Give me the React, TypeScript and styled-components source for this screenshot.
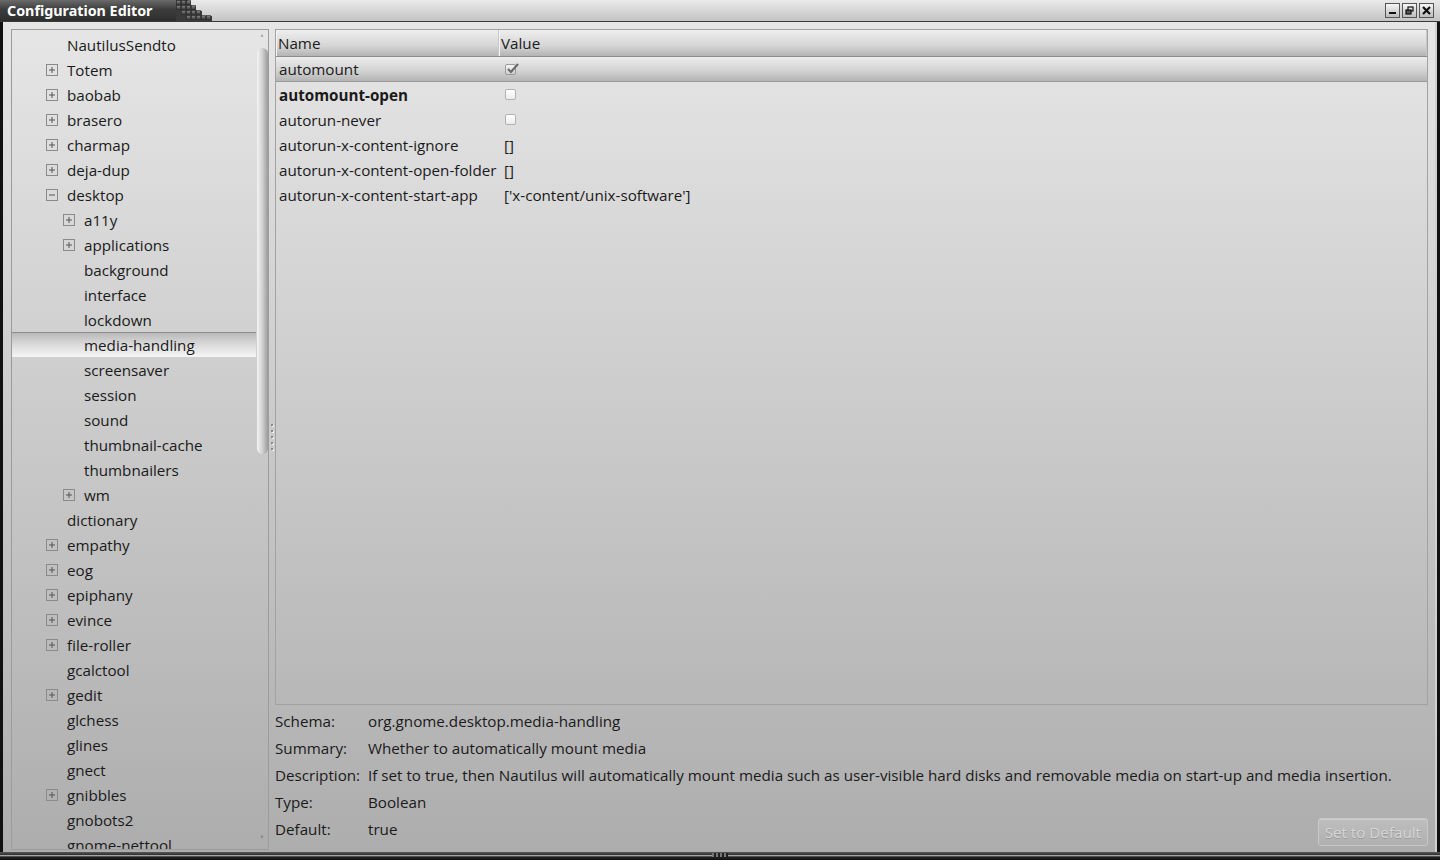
import React from 'react';
import styled, { createGlobalStyle, css } from 'styled-components';

const GlobalStyle = createGlobalStyle`
  html, body {
    margin: 0;
    padding: 0;
    height: 100%;
    overflow: hidden;
  }
  body {
    font-family: "Open Sans", "Noto Sans", sans-serif;
    color: #1a1a1a;
  }
`;

type TreeItem = {
  label: string;
  level: 1 | 2;
  expander?: 'plus' | 'minus';
  selected?: boolean;
};

const treeItems: TreeItem[] = [
  { label: 'NautilusSendto', level: 1 },
  { label: 'Totem', level: 1, expander: 'plus' },
  { label: 'baobab', level: 1, expander: 'plus' },
  { label: 'brasero', level: 1, expander: 'plus' },
  { label: 'charmap', level: 1, expander: 'plus' },
  { label: 'deja-dup', level: 1, expander: 'plus' },
  { label: 'desktop', level: 1, expander: 'minus' },
  { label: 'a11y', level: 2, expander: 'plus' },
  { label: 'applications', level: 2, expander: 'plus' },
  { label: 'background', level: 2 },
  { label: 'interface', level: 2 },
  { label: 'lockdown', level: 2 },
  { label: 'media-handling', level: 2, selected: true },
  { label: 'screensaver', level: 2 },
  { label: 'session', level: 2 },
  { label: 'sound', level: 2 },
  { label: 'thumbnail-cache', level: 2 },
  { label: 'thumbnailers', level: 2 },
  { label: 'wm', level: 2, expander: 'plus' },
  { label: 'dictionary', level: 1 },
  { label: 'empathy', level: 1, expander: 'plus' },
  { label: 'eog', level: 1, expander: 'plus' },
  { label: 'epiphany', level: 1, expander: 'plus' },
  { label: 'evince', level: 1, expander: 'plus' },
  { label: 'file-roller', level: 1, expander: 'plus' },
  { label: 'gcalctool', level: 1 },
  { label: 'gedit', level: 1, expander: 'plus' },
  { label: 'glchess', level: 1 },
  { label: 'glines', level: 1 },
  { label: 'gnect', level: 1 },
  { label: 'gnibbles', level: 1, expander: 'plus' },
  { label: 'gnobots2', level: 1 },
  { label: 'gnome-nettool', level: 1 },
];

type Key = {
  name: string;
  value: 'checked' | 'unchecked' | string;
  bold?: boolean;
  selected?: boolean;
};

const keys: Key[] = [
  { name: 'automount', value: 'checked', selected: true },
  { name: 'automount-open', value: 'unchecked', bold: true },
  { name: 'autorun-never', value: 'unchecked' },
  { name: 'autorun-x-content-ignore', value: '[]' },
  { name: 'autorun-x-content-open-folder', value: '[]' },
  { name: 'autorun-x-content-start-app', value: "['x-content/unix-software']" },
];

const Window = styled.div`
  width: 1440px;
  height: 860px;
  display: flex;
  flex-direction: column;
  background: #111;
  box-sizing: border-box;
`;

const TitleBar = styled.div`
  height: 22px;
  flex: none;
  display: flex;
  align-items: stretch;
  background: linear-gradient(#eaeaea, #c4c4c4);
  border-bottom: 1px solid #3a3a3a;
  box-sizing: border-box;
`;

const TitleTab = styled.div`
  width: 176px;
  display: flex;
  align-items: center;
  padding-left: 7px;
  box-sizing: border-box;
  background: linear-gradient(#6a6a6a, #3c3c3c 45%, #2e2e2e);
  color: #fff;
  font-family: "Noto Sans", "Open Sans", sans-serif;
  font-weight: 700;
  font-size: 14.3px;
`;

const Stairs = styled.svg`
  width: 44px;
  height: 21px;
  flex: none;
`;

const TitleSpacer = styled.div`
  flex: 1;
`;

const WinButtons = styled.div`
  display: flex;
  align-items: center;
  gap: 2px;
  padding-right: 6px;
`;

const WinButton = styled.div`
  width: 15px;
  height: 15px;
  box-sizing: border-box;
  border: 1px solid #555;
  background: linear-gradient(#f6f6f6, #bcbcbc);
  display: flex;
  align-items: center;
  justify-content: center;
`;

const Frame = styled.div`
  flex: 1;
  display: flex;
  min-height: 0;
  margin: 0 3px 0 3px;
  padding: 7px 7px 2px 8px;
  background: linear-gradient(#e6e6e6, #adadad);
  border-right: 2px solid #d0d0d0;
`;

const BottomEdge = styled.div`
  height: 8px;
  flex: none;
  display: flex;
  justify-content: center;
  background: linear-gradient(#5a5a5a, #2a2a2a 40%, #cfcfcf 45%, #222 60%, #111);
`;

const Grip = styled.div`
  width: 16px;
  height: 4px;
  margin-top: 1px;
  background: repeating-linear-gradient(90deg, #777 0 2px, #222 2px 4px);
`;

const TreePanel = styled.div`
  width: 258px;
  flex: none;
  display: flex;
  border: 1px solid #9c9c9c;
  box-sizing: border-box;
  overflow: hidden;
`;

const TreeList = styled.div`
  flex: 1;
  padding-top: 2px;
  overflow: hidden;
`;

const TreeRow = styled.div<{ $level: number; $selected?: boolean }>`
  height: 25px;
  display: flex;
  align-items: center;
  font-size: 15.2px;
  padding-left: ${p => (p.$level === 1 ? 34 : 51)}px;
  box-sizing: border-box;
  white-space: nowrap;
  ${p =>
    p.$selected &&
    css`
      border-top: 1px solid #8d8d8d;
      background: linear-gradient(#b9b9b9, #d8d8d8 45%, #f6f6f6);
    `}
`;

const ExpanderSlot = styled.div`
  width: 12px;
  height: 12px;
  margin-right: 9px;
  flex: none;
  display: flex;
  align-items: center;
  justify-content: center;
`;

const Expander = styled.svg`
  width: 12px;
  height: 12px;
`;

const ScrollTrack = styled.div`
  width: 12px;
  flex: none;
  display: flex;
  flex-direction: column;
  align-items: center;
`;

const ScrollArrow = styled.div`
  height: 18px;
  display: flex;
  align-items: center;
  justify-content: center;
  font-size: 10px;
  color: #444;
`;

const ScrollThumb = styled.div`
  width: 11px;
  height: 406px;
  border-radius: 6px;
  background: linear-gradient(90deg, #f4f4f4, #cfcfcf 50%, #9a9a9a);
`;

const ScrollRest = styled.div`
  flex: 1;
`;

const Splitter = styled.div`
  width: 6px;
  flex: none;
  display: flex;
  flex-direction: column;
  align-items: center;
  justify-content: center;
  gap: 4px;
  padding-bottom: 6px;
`;

const SplitDot = styled.span`
  width: 2px;
  height: 2px;
  background: #8a8a8a;
  box-shadow: 1px 1px 0 #f0f0f0;
`;

const RightPane = styled.div`
  flex: 1;
  display: flex;
  flex-direction: column;
  min-width: 0;
`;

const KeyTable = styled.div`
  height: 676px;
  flex: none;
  border: 1px solid #a2a2a2;
  box-sizing: border-box;
  display: flex;
  flex-direction: column;
`;

const HeaderRow = styled.div`
  height: 27px;
  flex: none;
  display: flex;
  box-sizing: border-box;
  background: linear-gradient(#eeeeee, #d6d6d6 60%, #b4b4b4);
  border-bottom: 1px solid #8c8c8c;
  font-size: 15.2px;
`;

const HeaderCell = styled.div<{ $width?: number }>`
  ${p => (p.$width ? `width: ${p.$width}px;` : 'flex: 1;')}
  display: flex;
  align-items: center;
  padding-left: 1px;
  box-sizing: border-box;
  border-right: 1px solid #c8c8c8;
  border-left: 1px solid #f4f4f4;
`;

const KeyRow = styled.div<{ $selected?: boolean }>`
  height: 25px;
  flex: none;
  display: flex;
  align-items: center;
  box-sizing: border-box;
  font-size: 15.2px;
  ${p =>
    p.$selected &&
    css`
      background: linear-gradient(#ececec, #d4d4d4 55%, #b4b4b4);
      border-bottom: 1px solid #9a9a9a;
    `}
`;

const NameCell = styled.div<{ $bold?: boolean }>`
  width: 228px;
  padding-left: 3px;
  box-sizing: border-box;
  font-weight: ${p => (p.$bold ? 700 : 400)};
  white-space: nowrap;
`;

const ValueCell = styled.div`
  flex: 1;
  display: flex;
  align-items: center;
  white-space: nowrap;
`;

const CheckBox = styled.div<{ $checked?: boolean }>`
  width: 11px;
  height: 11px;
  margin-left: 1px;
  border: 1px solid #b2b2b2;
  border-radius: 2px;
  box-sizing: border-box;
  background: linear-gradient(#ffffff, #ececec);
  position: relative;
  ${p =>
    p.$checked &&
    css`
      background: linear-gradient(#f4f4f4, #d0d0d0);
      border-color: #9a9a9a;
    `}
`;

const CheckMark = styled.svg`
  position: absolute;
  left: 0;
  top: -3px;
  width: 14px;
  height: 13px;
`;

const Details = styled.div`
  display: grid;
  grid-template-columns: 93px 1fr auto;
  grid-auto-rows: 27px;
  padding-top: 2px;
  font-size: 15.2px;
`;

const Label = styled.div`
  display: flex;
  align-items: center;
  white-space: nowrap;
`;

const Value = styled.div<{ $span?: boolean }>`
  display: flex;
  align-items: center;
  white-space: nowrap;
  ${p => p.$span && 'grid-column: 2 / span 2;'}
`;

const DefaultButton = styled.button`
  align-self: end;
  height: 28px;
  margin-bottom: -4px;
  padding: 0 6px;
  font-family: inherit;
  font-size: 15.2px;
  color: #d6d6d6;
  text-shadow: 0 1px 0 #9a9a9a;
  background: linear-gradient(#bebebe, #b0b0b0);
  border: 1px solid #c8c8c8;
  border-radius: 3px;
  box-shadow: inset 0 1px 0 #cdcdcd;
`;

const ExpanderIcon: React.FC<{ kind: 'plus' | 'minus' }> = ({ kind }) => (
  <Expander viewBox="0 0 12 12">
    <rect x="0.5" y="0.5" width="11" height="11" fill="none" stroke="#8a8a8a" />
    <line x1="3" y1="6" x2="9" y2="6" stroke="#555" />
    {kind === 'plus' && <line x1="6" y1="3" x2="6" y2="9" stroke="#555" />}
  </Expander>
);

const StairsIcon: React.FC = () => {
  const cells: [number, number][] = [
    [0, 0], [5, 0], [10, 0], [0, 5], [5, 5], [10, 5], [15, 5],
    [5, 10], [10, 10], [15, 10], [20, 10], [10, 15], [15, 15], [20, 15], [25, 15], [30, 15],
  ];
  return (
    <Stairs viewBox="0 0 44 21">
      <defs>
        <linearGradient id="cell" x1="0" y1="0" x2="0" y2="1">
          <stop offset="0" stopColor="#8a8a8a" />
          <stop offset="1" stopColor="#3a3a3a" />
        </linearGradient>
      </defs>
      <polygon points="0,0 0,21 36,21 36,16 26,16 26,11 20,11 20,6 15,6 15,1 12,1 12,0" fill="#3a3a3a" />
      {cells.map(([x, y]) => (
        <rect key={`${x}-${y}`} x={x + 0.5} y={y + 0.5} width={4} height={4} fill="url(#cell)" stroke="#2a2a2a" strokeWidth="0.6" />
      ))}
    </Stairs>
  );
};

const App: React.FC = () => {
  return (
    <>
      <GlobalStyle />
      <Window>
        <TitleBar>
          <TitleTab>Configuration Editor</TitleTab>
          <StairsIcon />
          <TitleSpacer />
          <WinButtons>
            <WinButton>
              <svg width="9" height="9" viewBox="0 0 9 9">
                <rect x="1" y="6" width="7" height="2" fill="#111" />
              </svg>
            </WinButton>
            <WinButton>
              <svg width="9" height="9" viewBox="0 0 9 9">
                <rect x="3" y="1" width="5" height="4" fill="none" stroke="#111" strokeWidth="1.2" />
                <rect x="1" y="4" width="5" height="4" fill="#555" stroke="#111" strokeWidth="1.2" />
              </svg>
            </WinButton>
            <WinButton>
              <svg width="9" height="9" viewBox="0 0 9 9">
                <path d="M1 1 L8 8 M8 1 L1 8" stroke="#111" strokeWidth="2.2" />
              </svg>
            </WinButton>
          </WinButtons>
        </TitleBar>

        <Frame>
          <TreePanel>
            <TreeList>
              {treeItems.map(item => (
                <TreeRow key={item.label} $level={item.level} $selected={item.selected}>
                  <ExpanderSlot>{item.expander && <ExpanderIcon kind={item.expander} />}</ExpanderSlot>
                  {item.label}
                </TreeRow>
              ))}
            </TreeList>
            <ScrollTrack>
              <ScrollArrow>˄</ScrollArrow>
              <ScrollThumb />
              <ScrollRest />
              <ScrollArrow>˅</ScrollArrow>
            </ScrollTrack>
          </TreePanel>

          <Splitter>
            {[0, 1, 2, 3, 4].map(i => (
              <SplitDot key={i} />
            ))}
          </Splitter>

          <RightPane>
            <KeyTable>
              <HeaderRow>
                <HeaderCell $width={223}>Name</HeaderCell>
                <HeaderCell>Value</HeaderCell>
              </HeaderRow>
              {keys.map(k => (
                <KeyRow key={k.name} $selected={k.selected}>
                  <NameCell $bold={k.bold}>{k.name}</NameCell>
                  <ValueCell>
                    {k.value === 'checked' || k.value === 'unchecked' ? (
                      <CheckBox $checked={k.value === 'checked'}>
                        {k.value === 'checked' && (
                          <CheckMark viewBox="0 0 14 13">
                            <path d="M2 7 L5 10 L12 2" fill="none" stroke="#6a6a6a" strokeWidth="2.2" />
                          </CheckMark>
                        )}
                      </CheckBox>
                    ) : (
                      k.value
                    )}
                  </ValueCell>
                </KeyRow>
              ))}
            </KeyTable>

            <Details>
              <Label>Schema:</Label>
              <Value $span>org.gnome.desktop.media-handling</Value>
              <Label>Summary:</Label>
              <Value $span>Whether to automatically mount media</Value>
              <Label>Description:</Label>
              <Value $span>
                If set to true, then Nautilus will automatically mount media such as user-visible hard disks and removable media on start-up and media insertion.
              </Value>
              <Label>Type:</Label>
              <Value $span>Boolean</Value>
              <Label>Default:</Label>
              <Value>true</Value>
              <DefaultButton disabled>Set to Default</DefaultButton>
            </Details>
          </RightPane>
        </Frame>

        <BottomEdge>
          <Grip />
        </BottomEdge>
      </Window>
    </>
  );
};

export default App;
